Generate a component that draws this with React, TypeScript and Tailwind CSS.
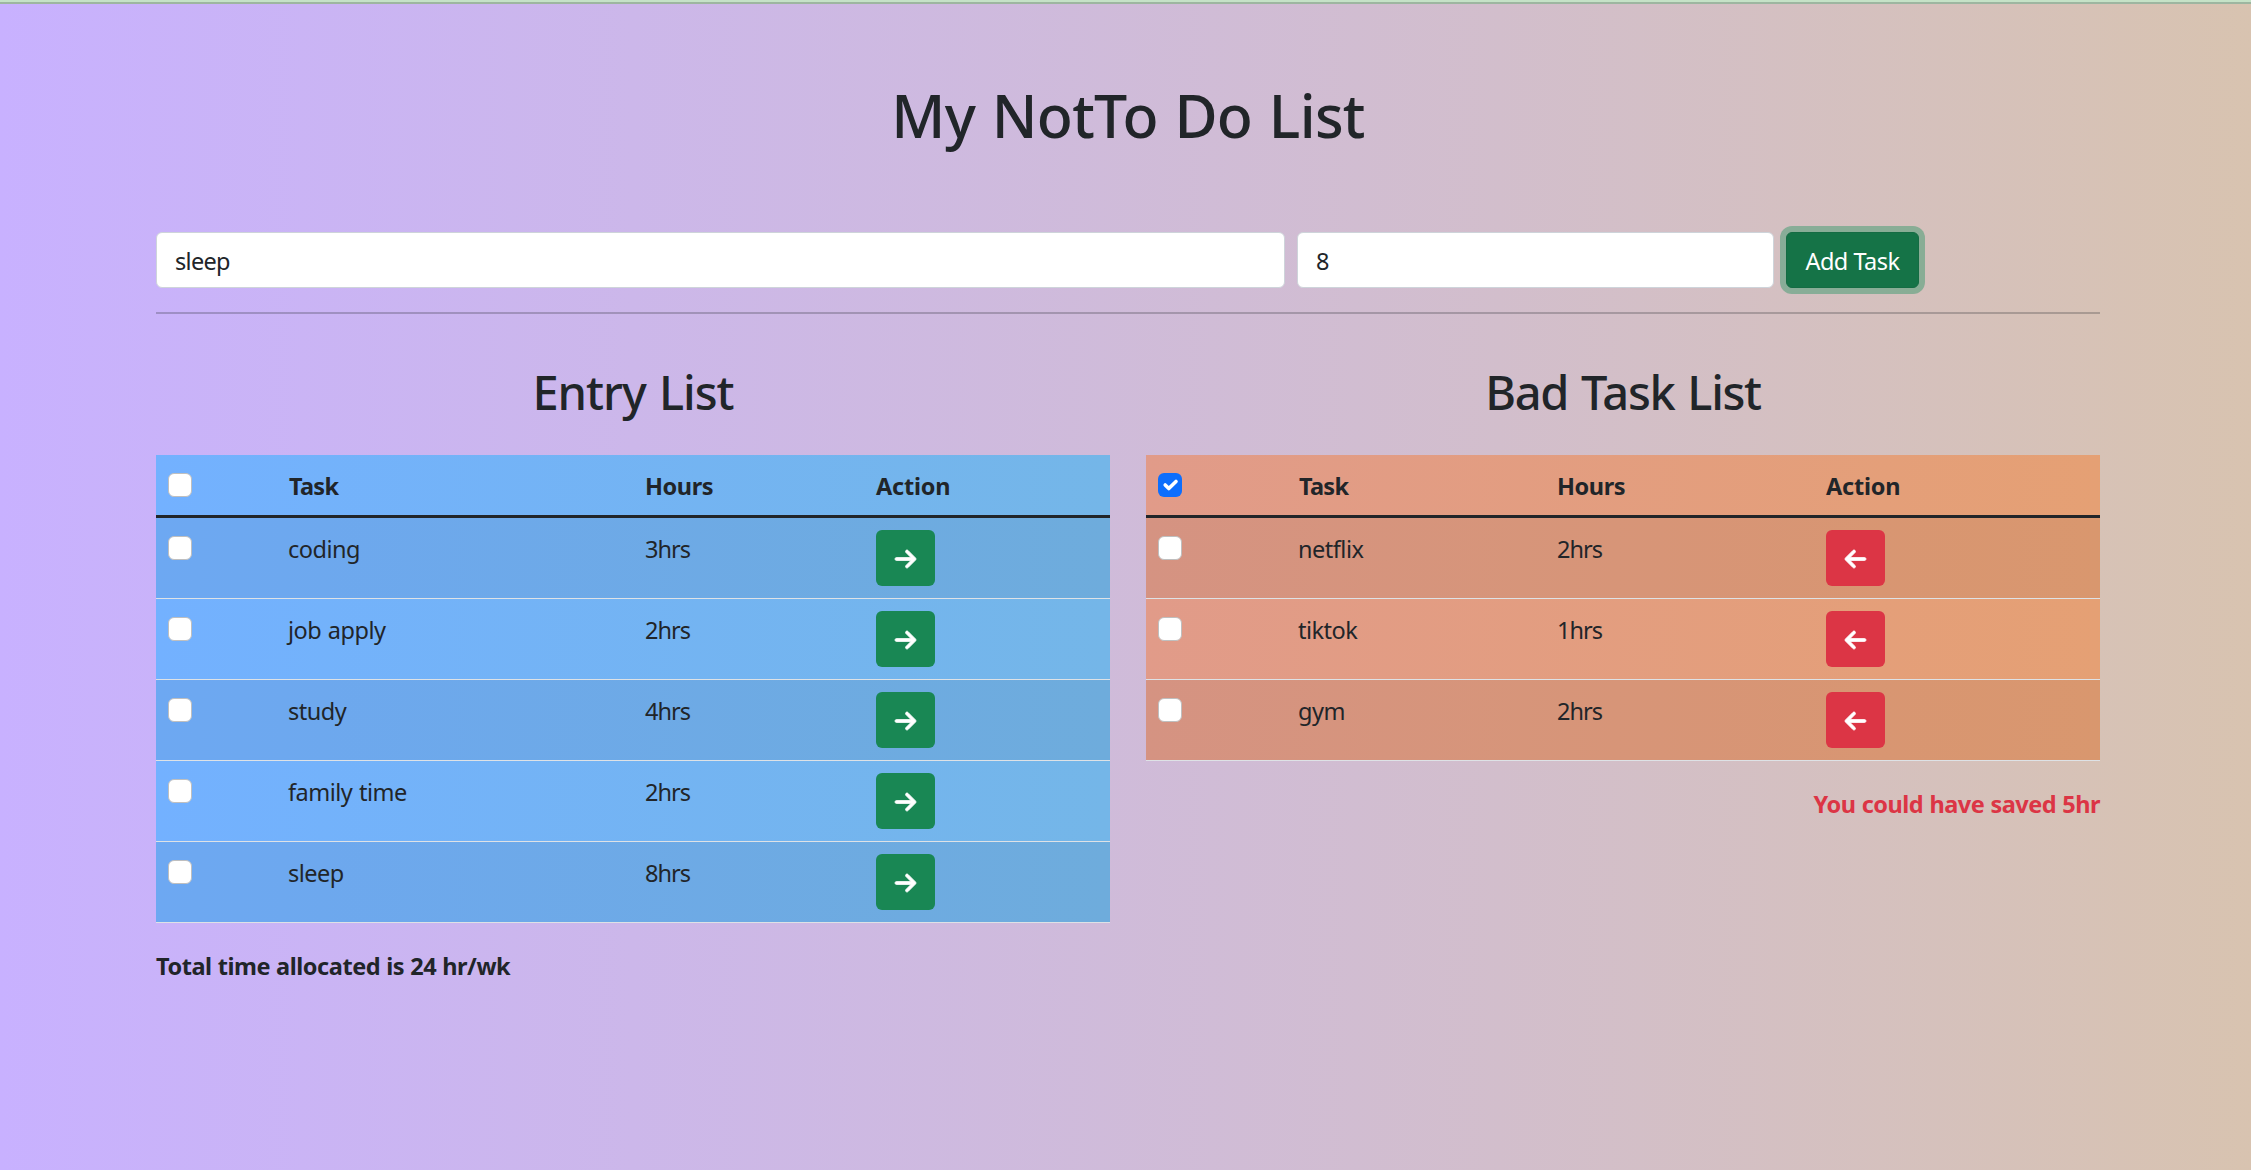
import { FaArrowLeft, FaArrowRight } from 'react-icons/fa6';

type Task = { name: string; hours: number };

const entries: Task[] = [
  { name: 'coding', hours: 3 },
  { name: 'job apply', hours: 2 },
  { name: 'study', hours: 4 },
  { name: 'family time', hours: 2 },
  { name: 'sleep', hours: 8 },
];

const badTasks: Task[] = [
  { name: 'netflix', hours: 2 },
  { name: 'tiktok', hours: 1 },
  { name: 'gym', hours: 2 },
];

function Check({ checked = false }: { checked?: boolean }) {
  return (
    <span
      role="checkbox"
      aria-checked={checked}
      className={
        checked
          ? 'block size-6 rounded-[6px] bg-[#0d6efd]'
          : 'block size-6 rounded-[6px] border border-[#bfbfbf] bg-white'
      }
    >
      {checked && (
        <svg viewBox="0 0 20 20" className="size-6" fill="none" stroke="#fff" strokeWidth="3" strokeLinecap="round" strokeLinejoin="round">
          <path d="m6 10 3 3 6-6" />
        </svg>
      )}
    </span>
  );
}

function TaskTable({ tasks, bad = false }: { tasks: Task[]; bad?: boolean }) {
  return (
    <table
      className={
        bad
          ? 'w-full table-fixed border-separate border-spacing-0 bg-linear-to-r from-[#e19b89] to-[#e5a074]'
          : 'w-full table-fixed border-separate border-spacing-0 bg-linear-to-r from-[#73b1ff] to-[#74b6e8]'
      }
    >
      <colgroup>
        <col className={bad ? 'w-[141px]' : 'w-[121px]'} />
        <col className={bad ? 'w-[259px]' : 'w-[357px]'} />
        <col className={bad ? 'w-[268px]' : 'w-[230px]'} />
        <col />
      </colgroup>
      <thead>
        <tr className="h-[63px] text-left align-top tracking-[-0.4px] *:border-b-[3px] *:border-[#212529] *:px-3 *:pt-[13px]">
          <th>
            <div className="pt-[5px]">
              <Check checked={bad} />
            </div>
          </th>
          <th className="tracking-[-0.7px]">Task</th>
          <th>
            <div className="-ml-px">Hours</div>
          </th>
          <th className="tracking-[-0.2px]">Action</th>
        </tr>
      </thead>
      <tbody>
        {tasks.map((task) => (
          <tr
            key={task.name}
            className="h-[81px] align-top odd:bg-black/5 *:border-b *:border-[#dee2e6] *:px-3 *:pt-[13px]"
          >
            <td>
              <div className="pt-[5px]">
                <Check />
              </div>
            </td>
            <td className="tracking-[-0.5px] [word-spacing:1px]">
              <div className="-ml-px">{task.name}</div>
            </td>
            <td className="tracking-[-1px]">
              <div className="-ml-px">{task.hours}hrs</div>
            </td>
            <td>
              <button
                className={
                  bad
                    ? '-mt-px flex h-14 w-[59px] items-center justify-center rounded-[6px] bg-[#dc3545] pt-0.5 text-white'
                    : '-mt-px flex h-14 w-[59px] items-center justify-center rounded-[6px] bg-[#198754] pt-0.5 text-white'
                }
              >
                {bad ? (
                  <FaArrowLeft className="h-6 w-[21px] overflow-visible stroke-current stroke-[16px]" />
                ) : (
                  <FaArrowRight className="h-6 w-[21px] overflow-visible stroke-current stroke-[16px]" />
                )}
              </button>
            </td>
          </tr>
        ))}
      </tbody>
    </table>
  );
}

export default function App() {
  return (
    <div className="flex h-[1170px] w-full flex-col bg-linear-to-r from-[#c8b1ff] to-[#d8c3b0] font-['Noto_Sans',sans-serif] text-[23.5px] leading-9 text-[#212529]">
      <div className="h-1 shrink-0 border-b-2 border-[#9db6a0] bg-[#c5e2c7]" />
      <main className="ml-[156px] w-[1944px]">
        <h1 className="mt-[75px] text-center text-[59px] leading-[72px] font-medium tracking-[-0.7px] [word-spacing:2px]">
          My NotTo Do List
        </h1>

        <form className="mt-[81px] flex h-14">
          <input
            defaultValue="sleep"
            className="w-[1129px] rounded-[6px] border border-[#ced4da] bg-white px-[18px] pt-0.5 tracking-[-0.7px] outline-none"
          />
          <input
            defaultValue="8"
            className="ml-3 w-[477px] rounded-[6px] border border-[#ced4da] bg-white px-[18px] pt-0.5 outline-none"
          />
          <button
            type="button"
            className="ml-3 w-[133px] rounded-[6px] border border-[#146c43] bg-[#157347] pt-0.5 tracking-[-0.5px] whitespace-nowrap text-white shadow-[0_0_0_6px_rgba(60,153,110,0.5)]"
          >
            Add Task
          </button>
        </form>

        <hr className="mt-6 h-0.5 border-0 bg-[#212529]/25" />

        <div className="mt-[49px] grid grid-cols-2 gap-9">
          <section>
            <h2 className="mb-[34px] text-center text-[47px] leading-[58px] font-medium tracking-[-1px] [word-spacing:2px]">
              Entry List
            </h2>
            <TaskTable tasks={entries} />
            <p className="mt-[25px] font-bold tracking-[-0.45px] [word-spacing:0.4px]">Total time allocated is 24 hr/wk</p>
          </section>
          <section>
            <h2 className="mb-[34px] text-center text-[47px] leading-[58px] font-medium tracking-[-1.3px] [word-spacing:2px]">
              Bad Task List
            </h2>
            <TaskTable tasks={badTasks} bad />
            <p className="mt-[25px] text-right font-bold tracking-[-0.5px] [word-spacing:0.6px] text-[#dc3545]">You could have saved 5hr</p>
          </section>
        </div>
      </main>
    </div>
  );
}
